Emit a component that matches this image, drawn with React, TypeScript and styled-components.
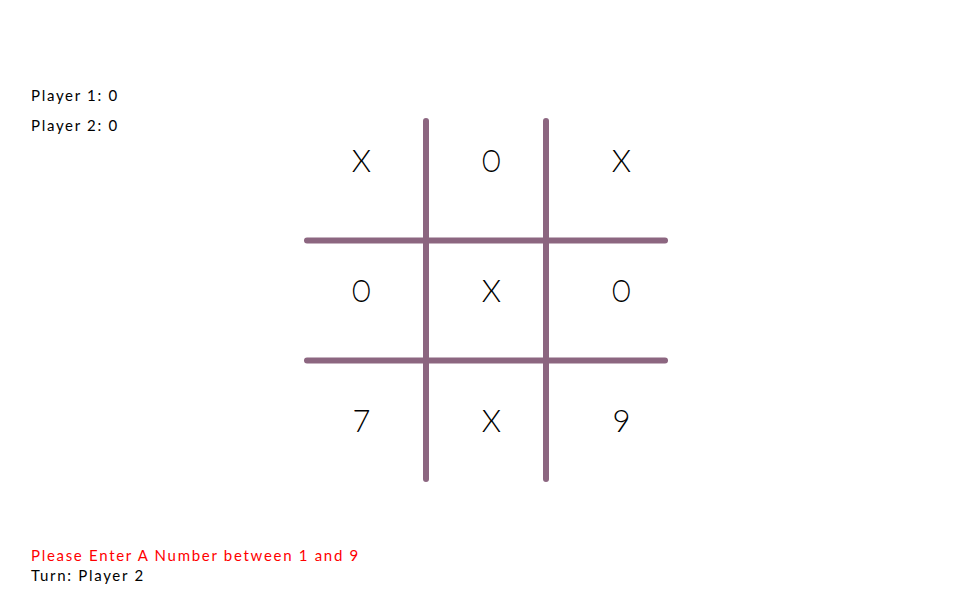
import React from "react";
import styled, { createGlobalStyle } from "styled-components";

const Global = createGlobalStyle`
  html, body {
    margin: 0;
    padding: 0;
    background: #ffffff;
  }
  body {
    font-family: "Lato", "Liberation Sans", sans-serif;
  }
`;

const Page = styled.div`
  width: 971px;
  height: 600px;
  display: grid;
  grid-template-columns: 1fr;
  grid-template-rows: 1fr;
  background: #ffffff;
  overflow: hidden;
`;

const Layer = styled.div`
  grid-area: 1 / 1;
`;

const Info = styled(Layer)<{ $bottom?: boolean }>`
  align-self: ${(p) => (p.$bottom ? "end" : "start")};
  justify-self: start;
  padding-left: 31px;
  padding-top: ${(p) => (p.$bottom ? "0" : "80px")};
  padding-bottom: ${(p) => (p.$bottom ? "15px" : "0")};
  display: flex;
  flex-direction: column;
`;

const Line = styled.div<{ $tone?: "red" | "black"; $tall?: boolean }>`
  font-family: "Lato", "Liberation Sans", sans-serif;
  font-weight: 400;
  font-size: 15px;
  letter-spacing: 1.7px;
  line-height: ${(p) => (p.$tall ? "30px" : "20px")};
  color: ${(p) => (p.$tone === "red" ? "#ff0000" : "#000000")};
  white-space: pre;
`;

const Board = styled(Layer)`
  align-self: center;
  justify-self: center;
  width: 366px;
  height: 366px;
  display: grid;
  grid-template-columns: 1fr;
  grid-template-rows: 1fr;
`;

const Lines = styled.svg`
  grid-area: 1 / 1;
  width: 366px;
  height: 366px;
  display: block;
`;

const CellGrid = styled.div`
  grid-area: 1 / 1;
  margin-left: -6px;
  margin-top: -22px;
  display: grid;
  grid-template-columns: repeat(3, 130px);
  grid-template-rows: repeat(3, 130px);
  width: 390px;
  height: 390px;
`;

const Cell = styled.div`
  display: flex;
  align-items: center;
  justify-content: center;
  font-family: "Lato", "Liberation Sans", sans-serif;
  font-weight: 300;
  font-size: 31px;
  line-height: 130px;
  color: #000000;
`;

const Glyph = styled.span<{ $narrow?: boolean }>`
  display: inline-block;
  transform: ${(p) => (p.$narrow ? "scaleX(0.8)" : "none")};
`;

const cells = ["X", "O", "X", "O", "X", "O", "7", "X", "9"];

const LINE_COLOR = "#8c6680";

export default function App() {
  return (
    <>
      <Global />
      <Page>
        <Info>
          <Line $tall>Player 1: 0</Line>
          <Line $tall>Player 2: 0</Line>
        </Info>
        <Board>
          <Lines viewBox="0 0 366 366">
            <g stroke={LINE_COLOR} strokeWidth={6} strokeLinecap="round">
              <line x1={123} y1={4} x2={123} y2={362} />
              <line x1={243} y1={4} x2={243} y2={362} />
              <line x1={4} y1={123.5} x2={362} y2={123.5} />
              <line x1={4} y1={243.5} x2={362} y2={243.5} />
            </g>
          </Lines>
          <CellGrid>
            {cells.map((c, i) => (
              <Cell key={i}>
                <Glyph $narrow={c === "O"}>{c}</Glyph>
              </Cell>
            ))}
          </CellGrid>
        </Board>
        <Info $bottom>
          <Line $tone="red">Please Enter A Number between 1 and 9</Line>
          <Line>Turn: Player 2</Line>
        </Info>
      </Page>
    </>
  );
}
